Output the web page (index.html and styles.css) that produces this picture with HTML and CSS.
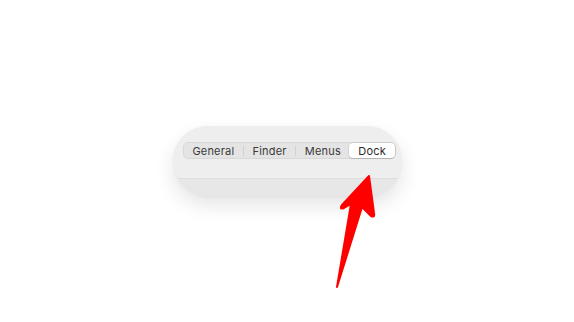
FILE: index.html
```html
<!DOCTYPE html>
<html>
<head>
<meta charset="utf-8">
<link rel="stylesheet" href="styles.css">
</head>
<body>
<div class="stage">
  <div class="pill">
    <div class="toolbar">
      <div class="seg">
        <div class="item w-general">General</div>
        <div class="sep"></div>
        <div class="item w-finder">Finder</div>
        <div class="sep"></div>
        <div class="item w-menus">Menus</div>
        <div class="item w-dock selected">Dock</div>
      </div>
    </div>
    <div class="lower"></div>
  </div>
  <svg class="arrow" width="574" height="322" viewBox="0 0 574 322">
    <path d="M369 176 L374 213 Q375 218 371 216 L362 207 L337 287 L351 204 L344 208 Q339 210 342 205 Z" fill="#ff0000" stroke="#ff0000" stroke-width="2" stroke-linejoin="round"/>
  </svg>
</div>
</body>
</html>
```
FILE: styles.css
```css
html, body {
  margin: 0;
  padding: 0;
  background: #ffffff;
}
.stage {
  position: relative;
  width: 574px;
  height: 322px;
  padding: 126px 0 0 173px;
  box-sizing: border-box;
  font-family: Inter, "Liberation Sans", sans-serif;
}
.pill {
  width: 229px;
  height: 70px;
  border-radius: 35px;
  background: #ececec;
  box-shadow: 0 9px 20px rgba(0, 0, 0, 0.11), 0 1px 3px rgba(0, 0, 0, 0.04);
  overflow: hidden;
  display: flex;
  flex-direction: column;
}
.toolbar {
  height: 53px;
  padding: 16px 0 0 10px;
  box-sizing: border-box;
  border-bottom: 1px solid #dddddd;
  background: #eeeeee;
}
.lower {
  flex: 1;
  background: #e7e7e7;
}
.seg {
  display: flex;
  align-items: center;
  width: 213px;
  height: 17px;
  box-sizing: border-box;
  border: 1px solid #d8d8d8;
  border-radius: 5px;
  background: #e4e4e4;
}
.item {
  height: 15px;
  display: flex;
  align-items: center;
  justify-content: center;
  font-size: 11px;
  color: #3a3a3a;
  letter-spacing: 0.2px;
}
.w-general { width: 59px; }
.w-finder { width: 52px; }
.w-menus { width: 53px; }
.w-dock { width: 46px; }
.sep {
  width: 1px;
  height: 10px;
  background: #d0d0d0;
}
.selected {
  background: #ffffff;
  border-radius: 4px;
  box-shadow: 0 0 0 0.5px rgba(0, 0, 0, 0.12), 0 1px 1px rgba(0, 0, 0, 0.12);
  color: #2a2a2a;
}
.arrow {
  position: absolute;
  left: 0;
  top: 0;
}
```
